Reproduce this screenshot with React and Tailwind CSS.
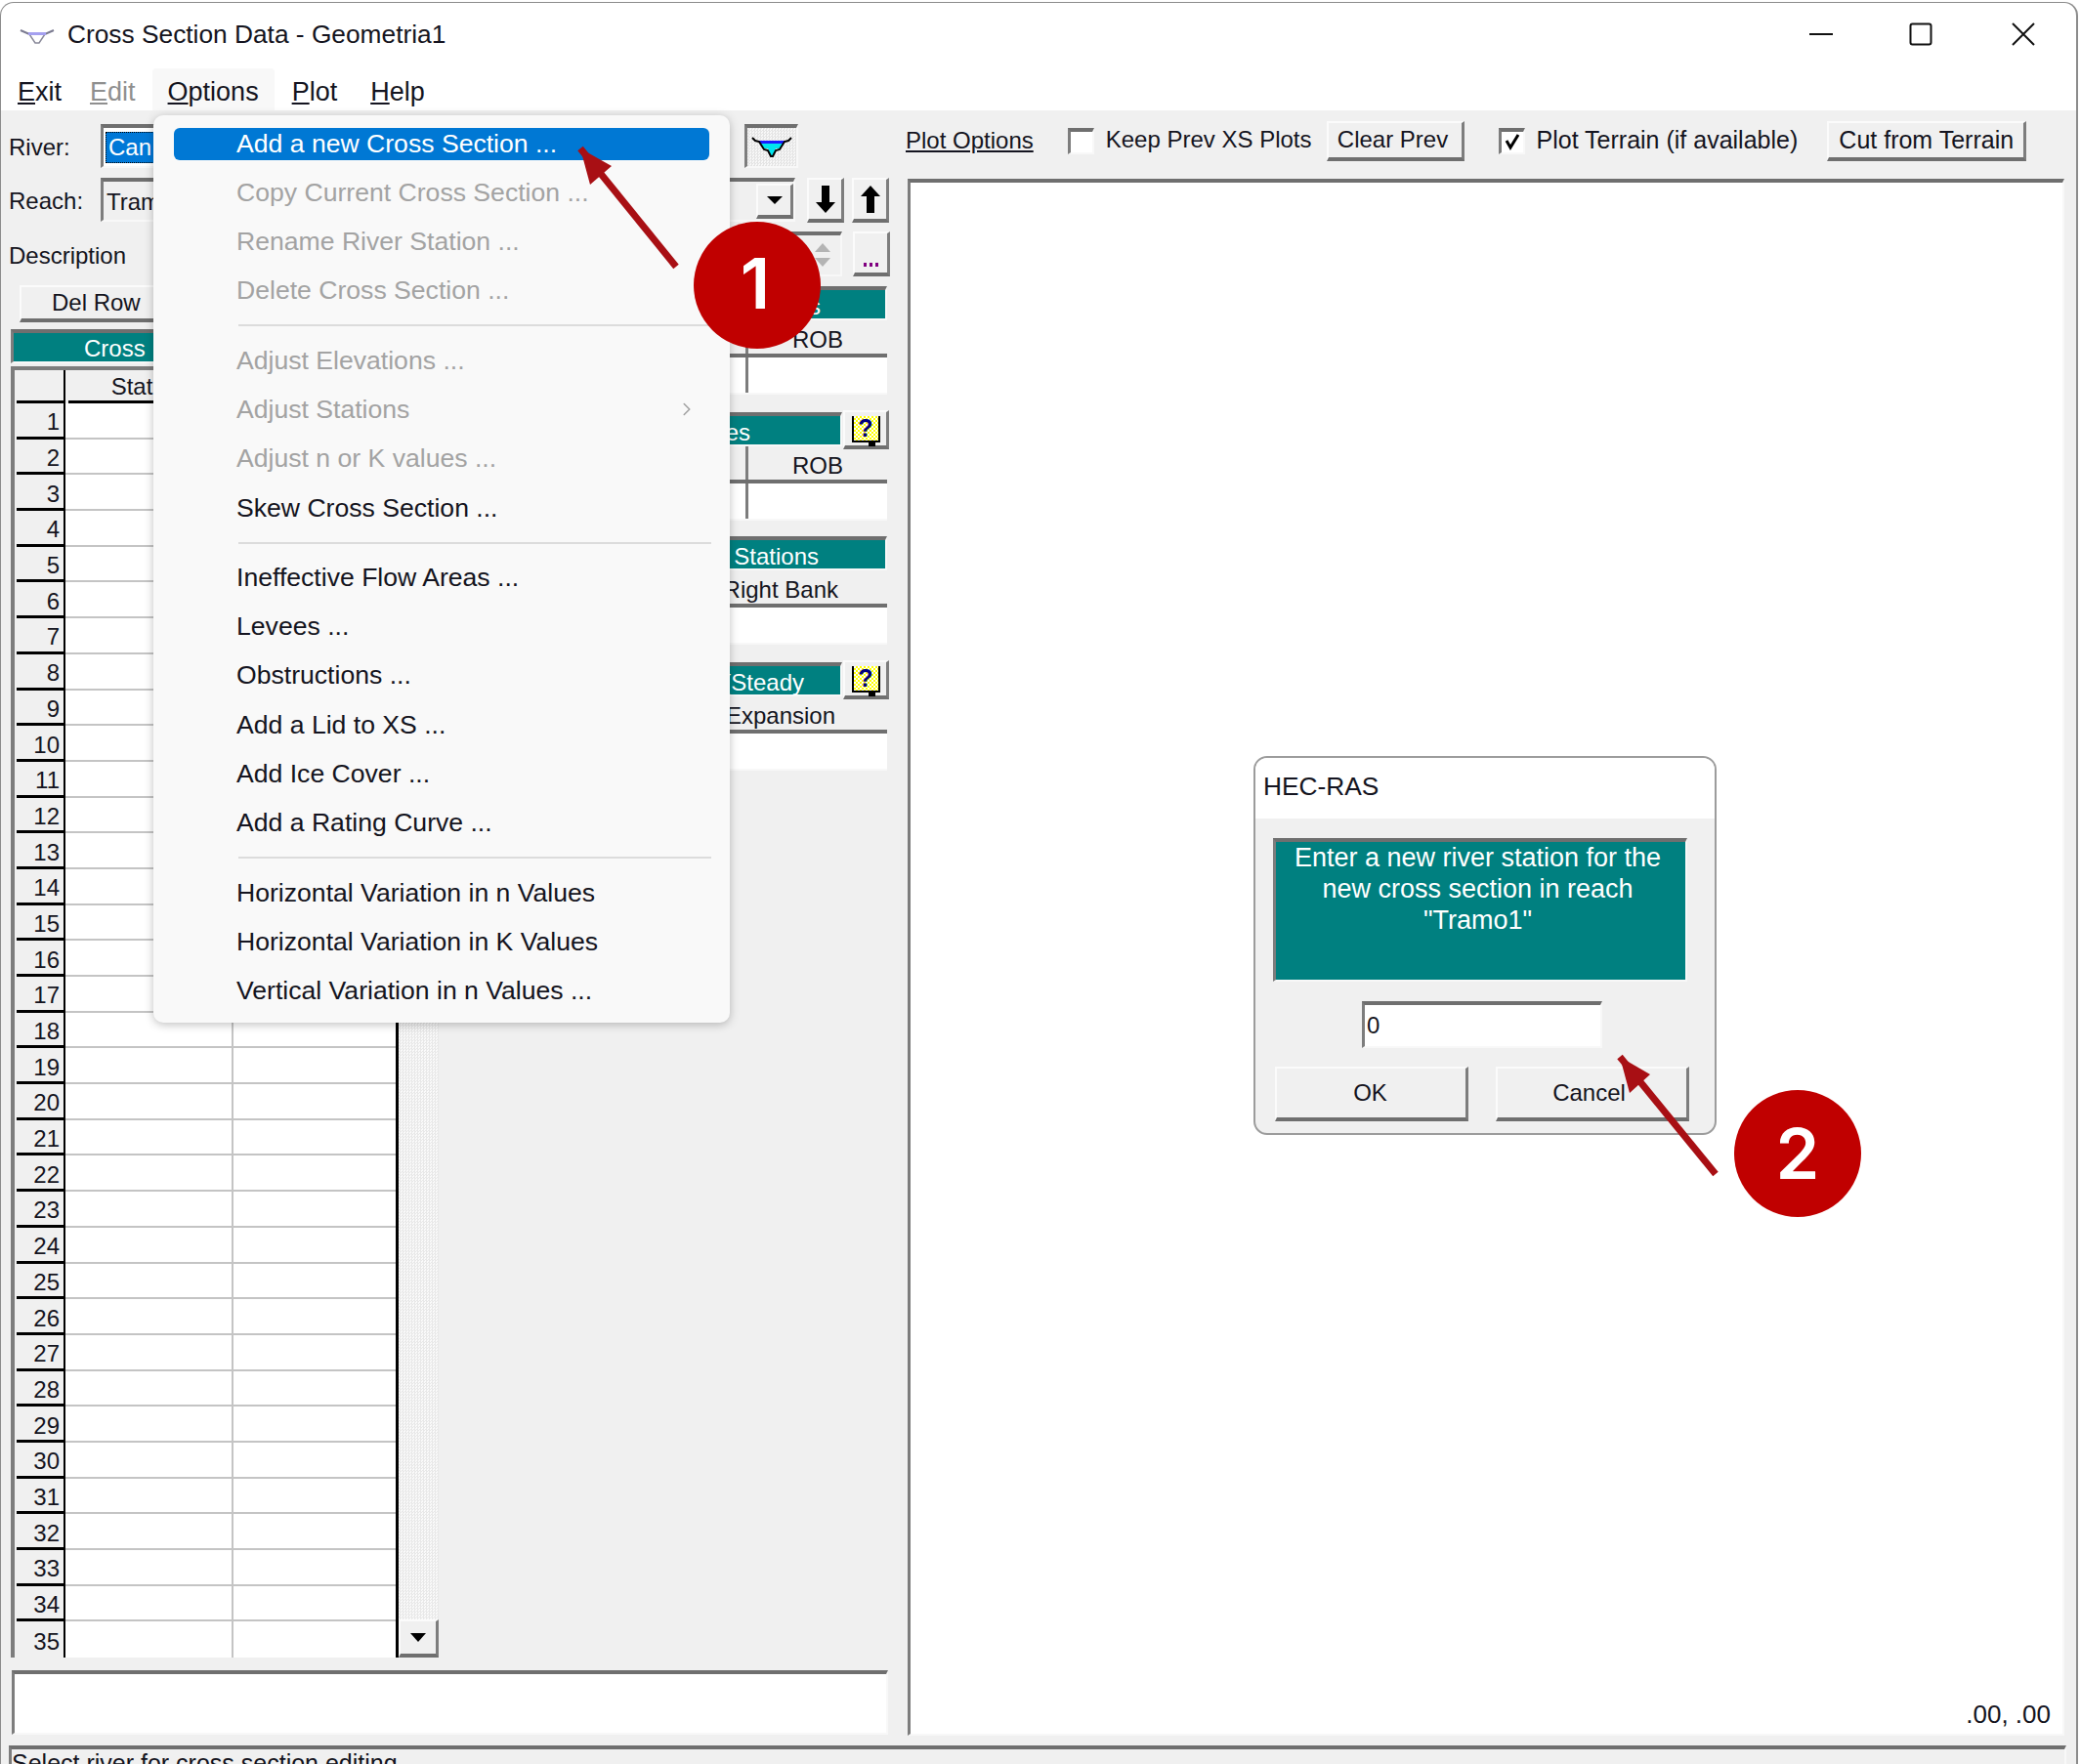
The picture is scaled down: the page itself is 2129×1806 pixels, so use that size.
import React from 'react';
import { ChevronRight } from 'lucide-react';

const raised = 'border-t-2 border-l-2 border-t-[#fbfbfb] border-l-[#fbfbfb] border-b-[4px] border-r-[3px] border-b-[#6f6f6f] border-r-[#7d7d7d] bg-[#f0f0f0]';
const sunken = 'border-t-[4px] border-l-[3px] border-t-[#6f6f6f] border-l-[#7d7d7d] border-b-2 border-r-2 border-b-[#f8f8f8] border-r-[#f8f8f8]';

const menuGroups = [
  [
    { label: 'Add a new Cross Section ...', active: true },
    { label: 'Copy Current Cross Section ...', off: true },
    { label: 'Rename River Station ...', off: true },
    { label: 'Delete Cross Section ...', off: true },
  ],
  [
    { label: 'Adjust Elevations ...', off: true },
    { label: 'Adjust Stations', off: true, sub: true },
    { label: 'Adjust n or K values ...', off: true },
    { label: 'Skew Cross Section ...' },
  ],
  [
    { label: 'Ineffective Flow Areas ...' },
    { label: 'Levees ...' },
    { label: 'Obstructions ...' },
    { label: 'Add a Lid to XS ...' },
    { label: 'Add Ice Cover ...' },
    { label: 'Add a Rating Curve ...' },
  ],
  [
    { label: 'Horizontal Variation in n Values' },
    { label: 'Horizontal Variation in K Values' },
    { label: 'Vertical Variation in n Values ...' },
  ],
];

const rows = Array.from({ length: 35 }, (_, i) => i + 1);

const Key = ({ children, k }) => (
  <span>
    {k ? <span className="underline">{k}</span> : null}
    {children}
  </span>
);

const HelpButton = () => (
  <div className={`w-[47px] h-[40px] -mr-[2px] -mt-[2px] ml-px flex items-center justify-center ${raised}`}>
    <div className="relative w-[29px] h-[27px] bg-[repeating-conic-gradient(#ffff00_0_25%,#ffffff_0_50%)] bg-size-[4px_4px] border-2 border-black border-t-0 flex items-center justify-center text-[#000080] font-bold text-[25px] leading-none">
      ?
      <div className="absolute -bottom-[6px] right-[3px] w-[7px] h-[5px] bg-black" />
    </div>
  </div>
);

const Group = ({ title, titlePad, help, head, headPad, divider, className }) => (
  <div className={`w-[458px] ${className}`}>
    <div className="flex h-[35px]">
      <div className={`flex-1 h-full bg-[#008080] text-white flex items-center justify-end pt-[4px] ${sunken}`}>
        <span className={titlePad}>{title}</span>
      </div>
      {help ? <HelpButton /> : null}
    </div>
    <div className="flex h-[38px] border-b-[4px] border-b-[#6f6f6f]">
      <div className={`flex-1 flex items-center justify-end ${divider ? 'border-r-[3px] border-r-[#7d7d7d]' : ''}`} />
      <div className={`flex items-center pt-[5px] ${divider ? 'w-[142px] justify-center' : `justify-end ${headPad}`}`}>{head}</div>
    </div>
    <div className="flex h-[38px] bg-white border-b-2 border-[#f8f8f8]">
      {divider ? <div className="w-[316px] border-r-[3px] border-r-[#7d7d7d]" /> : null}
    </div>
  </div>
);

export default function App() {
  return (
    <div className="w-[2129px] h-[1806px] bg-white overflow-hidden text-[24px] leading-none text-[#141420] font-['Liberation_Sans',Arial,sans-serif]">
      <div className="relative w-[2127px] h-[1808px] mt-[2px] border-l border-r-2 border-t border-[#8c8c8c] rounded-t-[14px] bg-white">
        {/* title bar */}
        <div className="h-[67px] flex items-center">
          <svg className="ml-[19px] mt-[2px] w-[36px] h-[16px]" viewBox="0 0 36 16" fill="none">
            <path d="M1 1 L10 5 H26 L35 1" stroke="#7a7a90" strokeWidth="2" />
            <path d="M10 5 H26 L20 14 H16 Z" fill="#fff" stroke="#8a8a9a" strokeWidth="1.5" />
            <rect x="9" y="3" width="18" height="3" fill="#a5a0f0" />
          </svg>
          <span className="ml-[13px] text-[26.3px] -mt-[2px]">Cross Section Data - Geometria1</span>
          <div className="ml-auto flex items-center pb-[3px]">
            <svg className="w-[24px] h-[24px]" viewBox="0 0 24 24"><path d="M0 12 H24" stroke="#111" strokeWidth="2" /></svg>
            <svg className="ml-[78px] w-[24px] h-[24px]" viewBox="0 0 24 24" fill="none"><rect x="1.5" y="1.5" width="21" height="21" rx="2" stroke="#111" strokeWidth="2" /></svg>
            <svg className="ml-[81px] mr-[42px] w-[24px] h-[24px]" viewBox="0 0 24 24" fill="none"><path d="M1 1 L23 23 M23 1 L1 23" stroke="#111" strokeWidth="2" /></svg>
          </div>
        </div>
        {/* menu bar */}
        <div className="h-[43px] flex items-center text-[27px] pl-[17px]">
          <span className="pt-[5px]"><Key k="E">xit</Key></span>
          <span className="ml-[29px] pt-[5px] text-[#8f8f8f]"><Key k="E">dit</Key></span>
          <span className="ml-[17px] h-full flex items-center pt-[5px] px-[16px] bg-[#f8f8f8] rounded-t-[4px]"><Key k="O">ptions</Key></span>
          <span className="ml-[18px] pt-[5px]"><Key k="P">lot</Key></span>
          <span className="ml-[34px] pt-[5px]"><Key k="H">elp</Key></span>
        </div>

        {/* body */}
        <div className="h-[1696px] bg-[#f0f0f0]">
          <div className="flex h-[1665px]">
            {/* left panel */}
            <div className="w-[928px] pt-[14px] flex flex-col">
              <div className="flex items-center h-[45px] pl-[8px]">
                <span className="w-[94px] pt-[3px]">River:</span>
                <div className={`w-[600px] h-full bg-white flex items-center pl-[2px] ${sunken}`}>
                  <span className="bg-[#0078d7] text-white border border-dotted border-black px-[2px] py-[3px]">Can</span>
                </div>
                <div className={`ml-[59px] w-[55px] h-full flex items-center justify-center bg-[repeating-conic-gradient(#e4e4e4_0_25%,#f8f8f8_0_50%)] bg-size-[3px_3px] ${sunken}`}>
                  <svg className="w-[42px] h-[22px]" viewBox="0 0 42 22">
                    <path d="M8 6 H34 L29 12 H13 Z" fill="#00e5ee" />
                    <path d="M8 4 H34 V7 H8 Z" fill="#1a1aff" />
                    <path d="M17 12 H25 L22 19 H20 Z" fill="#00e5ee" />
                    <path d="M1 1 L4 4 L8 5 L13 13 L17 14 L20 20 H22 L25 14 L29 13 L34 5 L38 4 L41 1" fill="none" stroke="#000" strokeWidth="2" />
                  </svg>
                </div>
              </div>
              <div className="flex items-center h-[45px] mt-[10px] pl-[8px]">
                <span className="w-[94px] pt-[3px]">Reach:</span>
                <div className={`w-[711px] h-full bg-[#f0f0f0] flex items-center justify-between pl-[3px] ${sunken}`}>
                  <span className="pt-[2px]">Tramo1</span>
                  <div className={`w-[38px] h-[36px] flex items-center justify-center ${raised}`}>
                    <div className="w-0 h-0 border-x-[8px] border-x-transparent border-t-[8px] border-t-black" />
                  </div>
                </div>
                <div className={`ml-[12px] w-[38px] h-[46px] flex items-center justify-center ${raised}`}>
                  <svg className="w-[20px] h-[28px]" viewBox="0 0 20 28"><path d="M6 0 H14 V17 H20 L10 28 L0 17 H6 Z" fill="#000" /></svg>
                </div>
                <div className={`ml-[8px] w-[38px] h-[46px] flex items-center justify-center ${raised}`}>
                  <svg className="w-[20px] h-[28px]" viewBox="0 0 20 28"><path d="M6 28 H14 V11 H20 L10 0 L0 11 H6 Z" fill="#000" /></svg>
                </div>
              </div>
              <div className="flex items-center h-[46px] mt-[10px] pl-[8px]">
                <span className="w-[150px] pt-[3px]">Description</span>
                <div className={`w-[703px] h-full flex flex-col items-end justify-center gap-[6px] pr-[10px] ${sunken}`}>
                  <div className="w-0 h-0 border-x-[8px] border-x-transparent border-b-[9px] border-b-[#b4b4b4]" />
                  <div className="w-0 h-0 border-x-[8px] border-x-transparent border-t-[9px] border-t-[#b4b4b4]" />
                </div>
                <div className={`ml-[11px] w-[38px] h-full flex items-end justify-center gap-[3px] pb-[6px] ${raised}`}>
                  <div className="w-[3px] h-[4px] bg-[#800080]" />
                  <div className="w-[3px] h-[4px] bg-[#800080]" />
                  <div className="w-[3px] h-[4px] bg-[#800080]" />
                </div>
              </div>

              <div className="flex mt-[9px] h-[1418px]">
                {/* table column */}
                <div className="w-[450px] pl-[10px]">
                  <div className={`ml-[9px] w-[280px] h-[38px] flex items-center justify-start pl-[31px] ${raised}`}>Del Row</div>
                  <div className={`mt-[7px] w-[438px] h-[35px] bg-[#008080] text-white flex items-center justify-start pl-[72px] pt-[3px] ${sunken}`}>
                    <span>Cross</span>
                    <span className="ml-[24px]">Section Coordinates</span>
                  </div>
                  <div className="mt-[3px] flex">
                    <div className="w-[394px] border-l-[4px] border-t-[4px] border-l-[#7d7d7d] border-t-[#7d7d7d]">
                      <div className="flex h-[34px] pl-[2px]">
                        <div className="w-[50px] border-b-[3px] border-b-black border-r-[2px] border-r-black" />
                        <div className="w-[170px] flex items-center justify-center pr-[8px] pt-[2px] border-b-[3px] border-b-black ml-[3px]">Station</div>
                        <div className="w-[163px] border-b-[3px] border-b-black ml-[1px]" />
                      </div>
                      {rows.map((n) => (
                        <div key={n} className="flex h-[36.7px] pl-[2px]">
                          <div className={`w-[50px] flex items-center justify-end pr-[4px] pt-[5px] border-r-[2px] border-r-black ${n < 35 ? 'border-b-[3px] border-b-black' : ''}`}>{n}</div>
                          <div className={`w-[172px] bg-white border-r-2 border-r-[#c4c4c4] ${n < 35 ? 'border-b-2 border-b-[#c4c4c4]' : ''}`} />
                          <div className={`flex-1 bg-white ${n < 35 ? 'border-b-2 border-b-[#c4c4c4]' : ''}`} />
                        </div>
                      ))}
                    </div>
                    <div className="w-[44px] border-l-[3px] border-l-black flex flex-col justify-end bg-[repeating-conic-gradient(#e8e8e8_0_25%,#fafafa_0_50%)] bg-size-[3px_3px]">
                      <div className={`h-[39px] flex items-center justify-center ${raised}`}>
                        <div className="w-0 h-0 border-x-[8px] border-x-transparent border-t-[9px] border-t-black" />
                      </div>
                    </div>
                  </div>
                </div>
                {/* parameter groups */}
                <div className="-ml-[1px] pt-[1px]">
                  <Group title="Downstream Reach Lengths" titlePad="pr-[66px]" head="ROB" divider />
                  <Group className="mt-[18px]" title="Manning's n Values" titlePad="pr-[92px]" head="ROB" divider help />
                  <Group className="mt-[16px]" title="Main Channel Bank Stations" titlePad="pr-[68px]" head="Right Bank" headPad="pr-[50px]" />
                  <Group className="mt-[18px]" title="Cont\Exp Coefficient (Steady" titlePad="pr-[37px]" head="Expansion" headPad="pr-[53px]" help />
                </div>
              </div>
              <div className={`ml-[11px] w-[897px] h-[66px] bg-white ${sunken}`} />
            </div>

            {/* plot column */}
            <div className="w-[1184px] flex flex-col">
              <div className="h-[70px] flex items-center pb-[8px]">
                <span className="underline -ml-[2px]">Plot Options</span>
                <div className={`ml-[35px] w-[27px] h-[27px] bg-white ${sunken}`} />
                <span className="ml-[12px] mb-[2px]">Keep Prev XS Plots</span>
                <div className={`ml-[15px] w-[141px] h-[41px] flex items-center justify-center pr-[4px] ${raised}`}>Clear Prev</div>
                <div className={`ml-[35px] w-[27px] h-[27px] bg-white flex items-center justify-center ${sunken}`}>
                  <svg className="w-[18px] h-[18px]" viewBox="0 0 18 18" fill="none"><path d="M3 8 L7 15 L15 2" stroke="#000" strokeWidth="3" /></svg>
                </div>
                <span className="ml-[12px] mb-[2px] text-[25px]">Plot Terrain (if available)</span>
                <div className={`ml-[30px] w-[204px] h-[41px] flex items-center justify-center text-[25px] ${raised}`}>Cut from Terrain</div>
              </div>
              <div className={`relative h-[1594px] bg-white flex items-end justify-end pb-[7px] pr-[12px] text-[26px] ${sunken}`}>
                <span>.00, .00</span>
              </div>
            </div>
          </div>
          {/* status bar */}
          <div className={`ml-[8px] mt-[9px] w-[2106px] h-[30px] pt-[2px] text-[25px] ${sunken}`}>Select river for cross section editing</div>
        </div>

        {/* Options menu */}
        <div className="absolute left-[156px] top-[115px] w-[590px] h-[929px] pt-[4px] bg-[#f9f9f9] rounded-[10px] shadow-[0_2px_10px_rgba(0,0,0,0.25)] text-[26.6px]">
          {menuGroups.map((group, i) => (
            <div key={i}>
              {i > 0 ? (
                <div className="h-[21.4px] flex items-center pl-[87px] pr-[19px]">
                  <div className="w-full h-[2px] bg-[#dcdcdc]" />
                </div>
              ) : null}
              {group.map((item) => (
                <div key={item.label} className="h-[50.2px] flex items-center px-[21px]">
                  <div className={`w-full h-[33px] flex items-center pl-[64px] pr-[12px] rounded-[6px] ${item.active ? 'bg-[#0078d4] text-white' : ''} ${item.off ? 'text-[#a3a3a3]' : ''}`}>
                    {item.label}
                    {item.sub ? <ChevronRight className="ml-auto w-[22px] h-[22px]" strokeWidth={1.75} /> : null}
                  </div>
                </div>
              ))}
            </div>
          ))}
        </div>

        {/* HEC-RAS prompt */}
        <div className="absolute left-[1282px] top-[771px] w-[474px] h-[388px] rounded-[14px] border-2 border-[#9c9c9c] bg-[#f0f0f0] overflow-hidden">
          <div className="h-[62px] bg-white flex items-center pl-[8px] pb-[4px] text-[26.3px]">HEC-RAS</div>
          <div className={`ml-[18px] mt-[20px] w-[424px] h-[147px] bg-[#008080] text-white text-center text-[27px] leading-[32px] pr-[6px] ${sunken}`}>
            Enter a new river station for the<br />new cross section in reach<br />"Tramo1"
          </div>
          <div className={`ml-[109px] mt-[20px] w-[246px] h-[48px] bg-white flex items-center pl-[2px] ${sunken}`}>0</div>
          <div className="flex gap-[28px] ml-[20px] mt-[19px]">
            <div className={`w-[198px] h-[56px] flex items-center justify-center ${raised}`}>
              <span className="pr-[2px]">OK</span>
            </div>
            <div className={`w-[198px] h-[56px] flex items-center justify-center ${raised}`}>
              <span className="pr-[6px]">Cancel</span>
            </div>
          </div>
        </div>

        {/* callouts */}
        <svg className="absolute left-0 top-0 w-[2127px] h-[1806px] pointer-events-none" viewBox="0 0 2127 1806" fill="none">
          <path d="M593 149 L 691 270" stroke="#a80f14" strokeWidth="7" />
          <path d="M593 149 L 625 167 L 603 186 Z" fill="#a80f14" />
          <path d="M1657 1079 L 1755 1199" stroke="#a80f14" strokeWidth="7" />
          <path d="M1657 1079 L 1688 1097 L 1667 1116 Z" fill="#a80f14" />
        </svg>
        <div className="absolute left-[709px] top-[224px] w-[130px] h-[130px] rounded-full bg-[#c00000] text-white flex items-center justify-center pb-[5px] pr-[4px] text-[72px] font-['Inter',sans-serif] font-semibold">1</div>
        <div className="absolute left-[1774px] top-[1113px] w-[130px] h-[130px] rounded-full bg-[#c00000] text-white flex items-center justify-center text-[72px] font-['Inter',sans-serif] font-semibold">2</div>
      </div>
    </div>
  );
}
